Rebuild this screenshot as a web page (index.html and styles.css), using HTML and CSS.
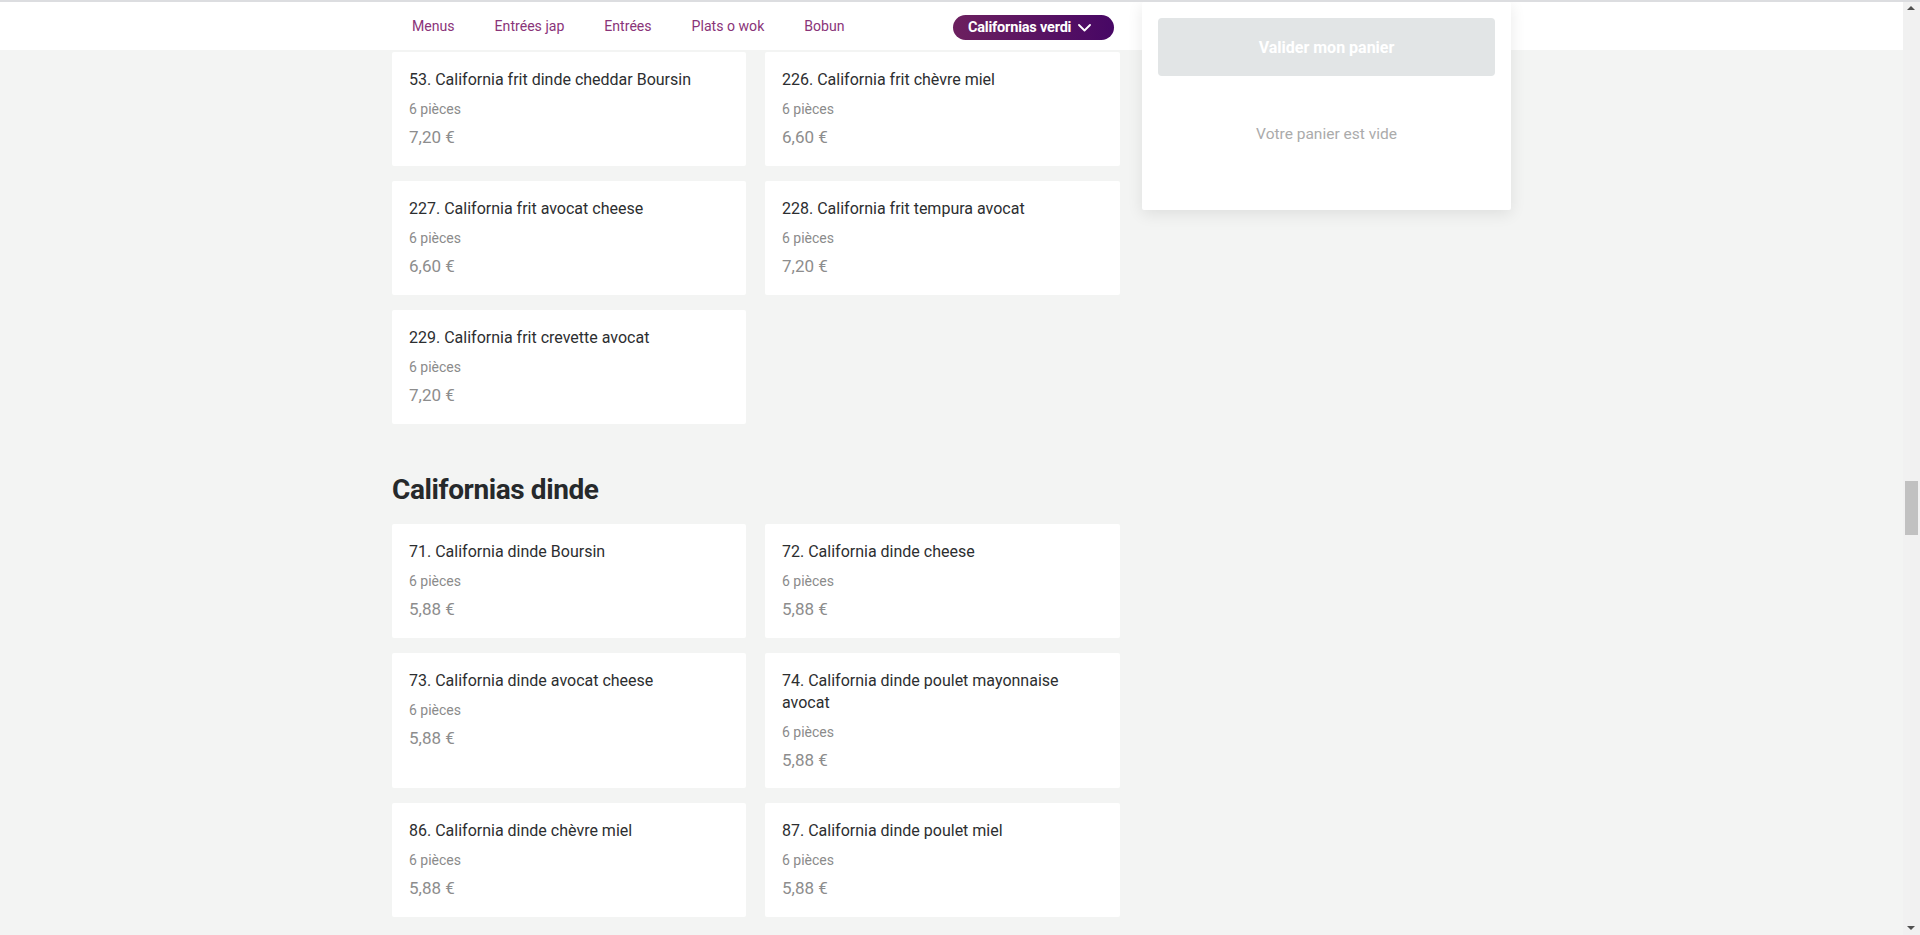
FILE: index.html
```html
<!DOCTYPE html>
<html lang="fr">
<head>
<meta charset="utf-8">
<title>Californias</title>
<link rel="stylesheet" href="styles.css">
</head>
<body>
<div class="topline"></div>
<div class="viewport">
  <header class="header">
    <div class="container">
      <nav class="nav">
        <a class="nav-link">Menus</a>
        <a class="nav-link">Entrées jap</a>
        <a class="nav-link">Entrées</a>
        <a class="nav-link">Plats o wok</a>
        <a class="nav-link">Bobun</a>
        <button class="pill"><span>Californias verdi</span>
          <svg class="chev" width="13" height="8" viewBox="0 0 13 8"><path d="M1 1l5.5 5.5L12 1" fill="none" stroke="#fff" stroke-width="1.8" stroke-linecap="round" stroke-linejoin="round"/></svg>
        </button>
      </nav>
    </div>
  </header>

  <div class="container layout">
    <main class="main">
      <section class="section">
        <div class="grid">
          <div class="card"><div class="title">53. California frit dinde cheddar Boursin</div><div class="pieces">6 pièces</div><div class="price">7,20 €</div></div>
          <div class="card"><div class="title">226. California frit chèvre miel</div><div class="pieces">6 pièces</div><div class="price">6,60 €</div></div>
          <div class="card"><div class="title">227. California frit avocat cheese</div><div class="pieces">6 pièces</div><div class="price">6,60 €</div></div>
          <div class="card"><div class="title">228. California frit tempura avocat</div><div class="pieces">6 pièces</div><div class="price">7,20 €</div></div>
          <div class="card"><div class="title">229. California frit crevette avocat</div><div class="pieces">6 pièces</div><div class="price">7,20 €</div></div>
        </div>
      </section>

      <section class="section">
        <h2 class="section-title">Californias dinde</h2>
        <div class="grid">
          <div class="card"><div class="title">71. California dinde Boursin</div><div class="pieces">6 pièces</div><div class="price">5,88 €</div></div>
          <div class="card"><div class="title">72. California dinde cheese</div><div class="pieces">6 pièces</div><div class="price">5,88 €</div></div>
          <div class="card"><div class="title">73. California dinde avocat cheese</div><div class="pieces">6 pièces</div><div class="price">5,88 €</div></div>
          <div class="card"><div class="title">74. California dinde poulet mayonnaise avocat</div><div class="pieces">6 pièces</div><div class="price">5,88 €</div></div>
          <div class="card"><div class="title">86. California dinde chèvre miel</div><div class="pieces">6 pièces</div><div class="price">5,88 €</div></div>
          <div class="card"><div class="title">87. California dinde poulet miel</div><div class="pieces">6 pièces</div><div class="price">5,88 €</div></div>
        </div>
      </section>
    </main>

    <aside class="cart">
      <button class="validate">Valider mon panier</button>
      <p class="empty">Votre panier est vide</p>
    </aside>
  </div>
</div>

<div class="scrollbar">
  <div class="arrow arrow-up"></div>
  <div class="thumb"></div>
  <div class="arrow arrow-down"></div>
</div>
</body>
</html>
```

FILE: styles.css
```css
html, body {
  margin: 0;
  padding: 0;
  height: 100%;
  overflow: hidden;
}

body {
  background: #f3f4f3;
  font-family: Roboto, "Liberation Sans", sans-serif;
  color: #2f3133;
}

.topline {
  position: fixed;
  top: 0;
  left: 0;
  right: 0;
  height: 2px;
  background: #dcdde0;
  z-index: 10;
}

.viewport {
  margin-right: 17px;
}

.container {
  width: 1119px;
  margin: 0 auto;
}

.header {
  background: #fff;
  height: 48px;
  margin-top: 2px;
}

.nav {
  width: 728px;
  height: 48px;
  display: flex;
  align-items: center;
}

.nav-link {
  padding: 0 20px;
  font-size: 14.1px;
  color: #8a3479;
  cursor: pointer;
}

.pill {
  margin-left: auto;
  margin-right: 6px;
  margin-top: 2px;
  height: 25px;
  width: 161px;
  border: 0;
  border-radius: 13px;
  background: linear-gradient(90deg, #6c205f 0%, #5a1462 50%, #470765 100%);
  color: #fff;
  font-family: Roboto, "Liberation Sans", sans-serif;
  font-weight: 700;
  font-size: 14.5px;
  letter-spacing: -0.2px;
  display: flex;
  align-items: center;
  gap: 7px;
  padding: 0 0 0 15px;
}

.chev {
  display: block;
  margin-top: 1px;
}

.layout {
  display: flex;
  align-items: flex-start;
  gap: 22px;
}

.main {
  width: 728px;
  padding-top: 2px;
}

.grid {
  display: grid;
  grid-template-columns: 354px 355px;
  column-gap: 19px;
  row-gap: 15px;
}

.card {
  background: #fff;
  border-radius: 2px;
  padding: 17px 17px 18px;
  min-height: 79px;
}

.title {
  font-size: 16px;
  line-height: 22px;
  color: #2c2e30;
}

.pieces {
  margin-top: 8px;
  font-size: 14px;
  line-height: 20px;
  color: #8b8b8b;
}

.price {
  margin-top: 8px;
  font-size: 17px;
  line-height: 20px;
  color: #8d8d8d;
}

.section-title {
  margin: 48px 0 16px;
  font-size: 28px;
  line-height: 36px;
  font-weight: 700;
  color: #26292b;
  letter-spacing: -0.4px;
}

.cart {
  width: 369px;
  box-sizing: border-box;
  margin-top: -48px;
  position: relative;
  z-index: 5;
  background: #fff;
  border-radius: 2px;
  box-shadow: 0 4px 16px rgba(0, 0, 0, 0.09);
  padding: 16px 16px 1px;
  height: 208px;
}

.validate {
  display: block;
  width: 100%;
  height: 58px;
  border: 0;
  border-radius: 4px;
  background: #e2e5e6;
  color: #fff;
  font-family: Roboto, "Liberation Sans", sans-serif;
  font-weight: 700;
  font-size: 16px;
}

.empty {
  margin: 48px 0 0;
  text-align: center;
  font-size: 15.5px;
  line-height: 20px;
  color: #ababab;
}

.scrollbar {
  position: fixed;
  top: 0;
  right: 0;
  width: 17px;
  height: 100%;
  background: #f1f1f1;
  z-index: 8;
}

.thumb {
  position: absolute;
  left: 2px;
  right: 2px;
  top: 481px;
  height: 54px;
  background: #c1c1c1;
}

.arrow {
  position: absolute;
  left: 4px;
  width: 0;
  height: 0;
  border-left: 4.5px solid transparent;
  border-right: 4.5px solid transparent;
}

.arrow-up {
  top: 6px;
  border-bottom: 4px solid #505050;
}

.arrow-down {
  bottom: 5px;
  border-top: 4px solid #505050;
}
```
